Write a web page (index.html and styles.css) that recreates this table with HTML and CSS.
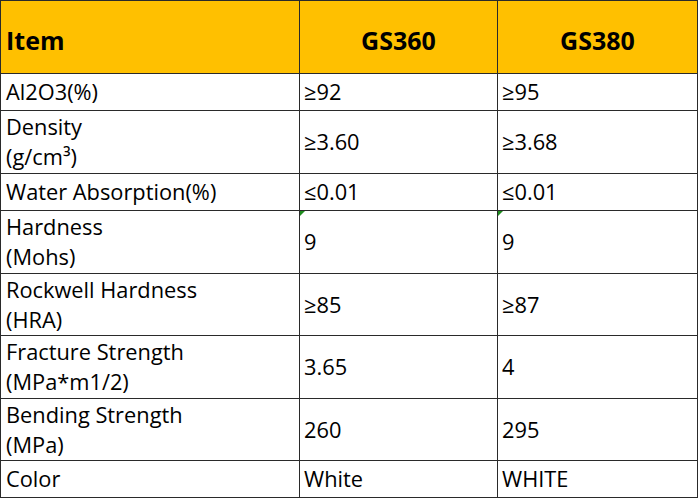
FILE: index.html
```html
<!DOCTYPE html>
<html>
<head>
<meta charset="utf-8">
<link rel="stylesheet" href="styles.css">
</head>
<body>
<table class="spec">
  <colgroup>
    <col class="c1"><col class="c2"><col class="c3">
  </colgroup>
  <tr class="head">
    <th class="lab">Item</th>
    <th>GS360</th>
    <th>GS380</th>
  </tr>
  <tr class="r1">
    <td>Al2O3(%)</td><td>≥92</td><td>≥95</td>
  </tr>
  <tr class="r2l">
    <td>Density<br>(g/cm³)</td><td>≥3.60</td><td>≥3.68</td>
  </tr>
  <tr class="r1">
    <td>Water Absorption(%)</td><td>≤0.01</td><td>≤0.01</td>
  </tr>
  <tr class="r2l">
    <td>Hardness<br>(Mohs)</td><td class="mark"><span class="tri"></span>9</td><td class="mark"><span class="tri"></span>9</td>
  </tr>
  <tr class="r2s">
    <td>Rockwell Hardness<br>(HRA)</td><td>≥85</td><td>≥87</td>
  </tr>
  <tr class="r2l">
    <td>Fracture Strength<br>(MPa*m1/2)</td><td>3.65</td><td>4</td>
  </tr>
  <tr class="r2s">
    <td>Bending Strength<br>(MPa)</td><td>260</td><td>295</td>
  </tr>
  <tr class="r1">
    <td>Color</td><td>White</td><td>WHITE</td>
  </tr>
</table>
</body>
</html>
```
FILE: styles.css
```css
html, body {
  margin: 0;
  padding: 0;
  background: #ffffff;
}
.spec {
  border-collapse: collapse;
  table-layout: fixed;
  width: 698px;
  font-family: "Open Sans", "Noto Sans", sans-serif;
  color: #000;
}
.c1 { width: 299px; }
.c2 { width: 198px; }
.c3 { width: 200px; }
.spec th, .spec td {
  border: 1px solid #2a2a2a;
  padding: 0 0 0 4px;
  vertical-align: middle;
  text-align: left;
  font-size: 21.8px;
  line-height: 30px;
  font-weight: normal;
  white-space: nowrap;
  box-sizing: border-box;
}
.spec td:first-child {
  padding-left: 5px;
}
.spec .head th {
  background: #ffc000;
  height: 73px;
  font-size: 25px;
  font-weight: bold;
  text-align: center;
  padding: 5px 0 0 0;
}
.spec .head th.lab {
  text-align: left;
  padding-left: 5px;
}
.r1 td { height: 37px; }
.r2l td { height: 63px; }
.r2s td { height: 62px; }
.mark { position: relative; }
.tri {
  position: absolute;
  left: 0;
  top: 0;
  width: 0;
  height: 0;
  border-top: 5px solid #1e8c1e;
  border-right: 5px solid transparent;
}
```
